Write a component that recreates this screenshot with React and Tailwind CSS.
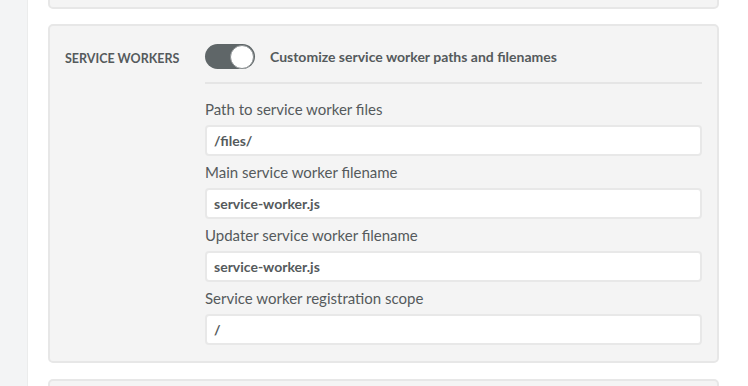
import React from "react";

const FIELDS = [
  { label: "Path to service worker files", value: "/files/" },
  { label: "Main service worker filename", value: "service-worker.js" },
  { label: "Updater service worker filename", value: "service-worker.js" },
  { label: "Service worker registration scope", value: "/" },
];

export default function App() {
  return (
    <div className="w-[748px] h-[386px] overflow-hidden flex bg-white text-[#555a5c] font-['Lato',sans-serif]">
      <div className="w-[28px] shrink-0 bg-[#f3f4f5] border-r border-[#ebecec]" />
      <div className="flex-1 pl-[20px] pr-[29px] flex flex-col">
        {/* previous card, only its bottom edge shows */}
        <div className="mt-[-40px] h-[49px] shrink-0 bg-[#f4f4f4] border-2 border-[#e7e7e7] rounded-[5px]" />

        <div className="mt-[15px] shrink-0 bg-[#f4f4f4] border-2 border-[#e7e7e7] rounded-[5px] flex pt-[18px] pb-[16px] pr-[15px]">
          <div className="w-[155px] shrink-0 pl-[15px] pt-[6px] text-[12.5px] font-bold uppercase">
            Service Workers
          </div>
          <div className="flex-1 flex flex-col">
            <div className="flex items-center gap-[15px] pb-[13px] border-b-2 border-[#e5e5e5]">
              <div className="w-[50px] h-[25px] rounded-full bg-[#5f6668] flex items-center justify-end pr-[1px]">
                <div className="w-[24px] h-[24px] rounded-full bg-white border border-[#8a8f91]" />
              </div>
              <span className="text-[14px] font-bold">Customize service worker paths and filenames</span>
            </div>
            <div className="pt-[15px] flex flex-col">
              {FIELDS.map((f, i) => (
                <div key={i} className="flex flex-col">
                  <label className={`h-[20px] leading-[20px] text-[15px] mb-[6px] ${i > 0 ? "mt-[6px]" : ""}`}>
                    {f.label}
                  </label>
                  <div className="h-[31px] bg-white border-2 border-[#e8e8e8] rounded-[4px] px-[7px] flex items-center text-[14px] font-bold">
                    {f.value}
                  </div>
                </div>
              ))}
            </div>
          </div>
        </div>

        <div className="mt-[16px] h-[40px] shrink-0 bg-[#f4f4f4] border-2 border-[#e7e7e7] rounded-[5px]" />
      </div>
    </div>
  );
}
